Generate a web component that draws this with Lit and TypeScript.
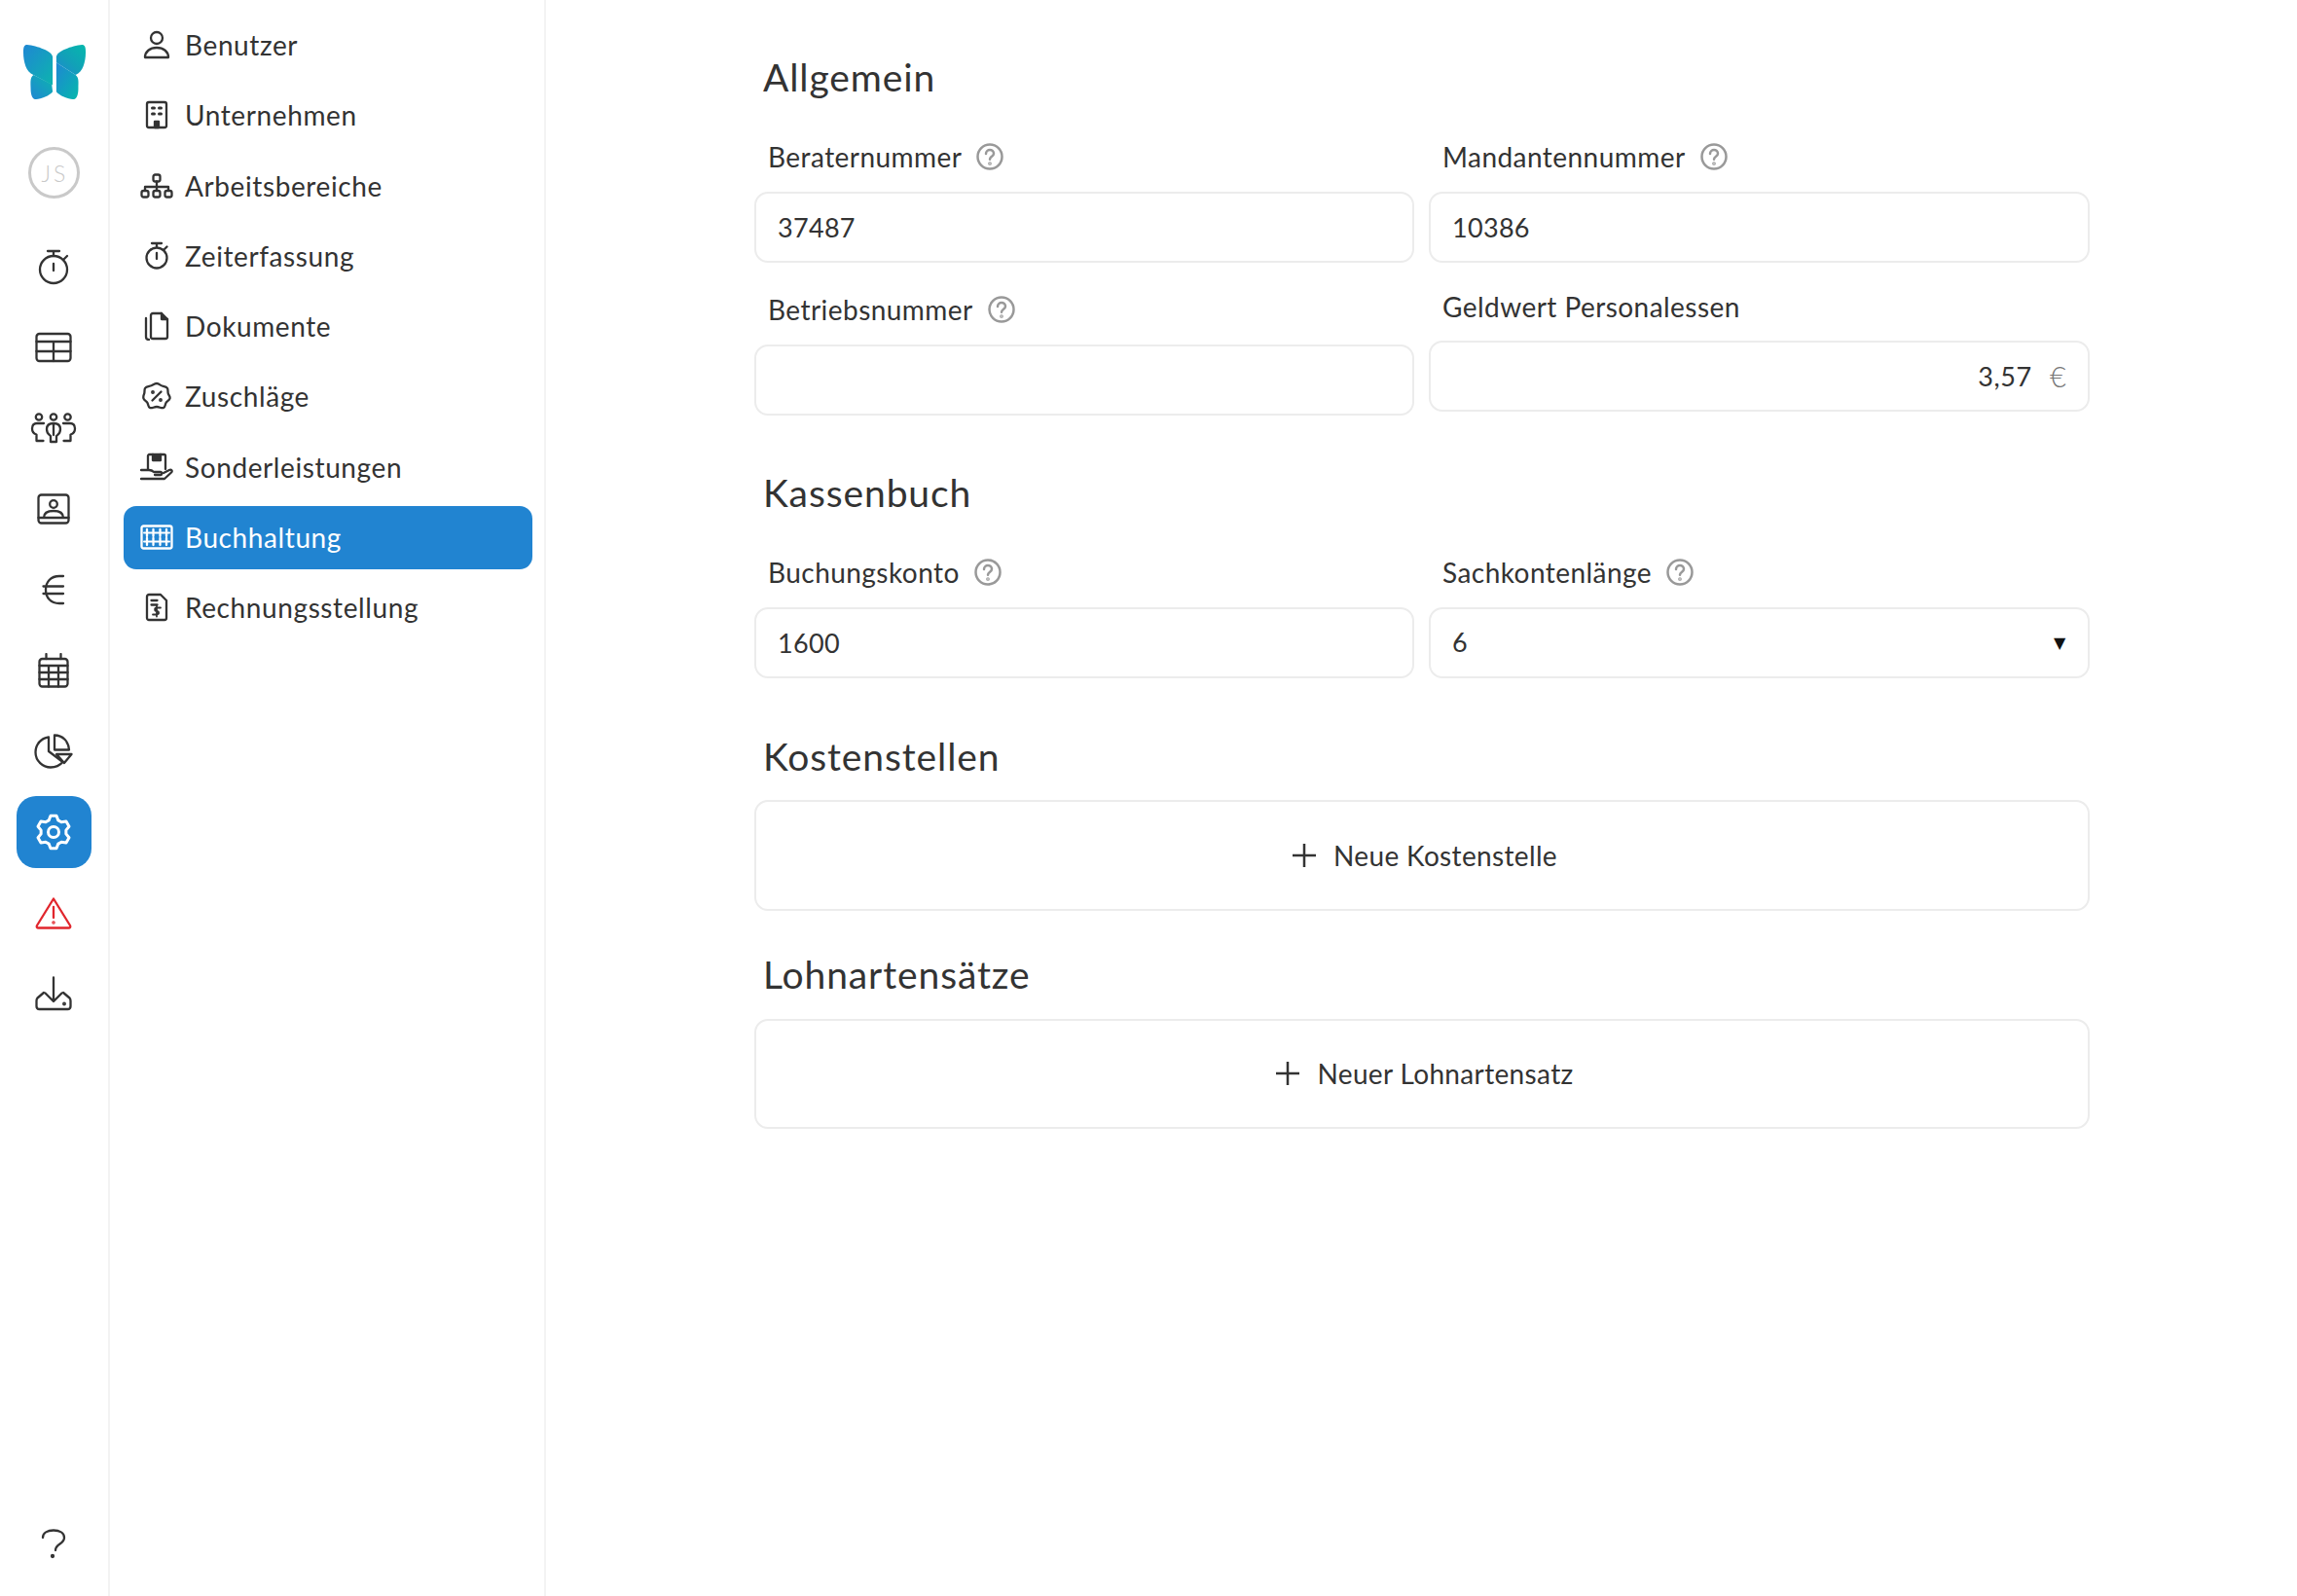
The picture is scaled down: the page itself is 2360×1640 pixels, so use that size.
import { LitElement, html, css, svg } from "lit";
import { customElement } from "lit/decorators.js";

const ic = (w: number, h: number, body: unknown, cls = "") => html`<svg class="ic ${cls}" width=${w} height=${h} viewBox="0 0 ${w} ${h}">${body}</svg>`;

function gearPath(cx: number, cy: number, ro: number, ri: number, n: number) {
  let d = "";
  const step = (Math.PI * 2) / n;
  for (let i = 0; i < n; i++) {
    const a = i * step - Math.PI / 2;
    const pts: [number, number][] = [
      [a - step * 0.36, ri], [a - step * 0.17, ro], [a + step * 0.17, ro], [a + step * 0.36, ri],
    ];
    pts.forEach(([t, r], j) => {
      const x = (cx + Math.cos(t) * r).toFixed(2);
      const y = (cy + Math.sin(t) * r).toFixed(2);
      d += i === 0 && j === 0 ? `M${x} ${y}` : `L${x} ${y}`;
    });
  }
  return d + "Z";
}

const rail = {
  timer: ic(38, 38, svg`<circle cx="19" cy="22" r="14"/><path d="M13 3h12M19 3v5M19 16v7M29 12l4-4"/>`),
  table: ic(38, 32, svg`<rect x="1.5" y="2" width="35" height="28" rx="3"/><path d="M1.5 10h35M1.5 20h35M19 10v20"/>`),
  people: ic(48, 32, svg`<circle cx="9" cy="4.5" r="3.2"/><circle cx="24" cy="4.5" r="3.2"/><circle cx="38.5" cy="4.5" r="3.2"/>
    <path d="M24 11c-5 0-7 2-7 6 0 5 3 6 4 7v6h6v-6c1-1 4-2 4-7 0-4-2-6-7-6zM24 11v12"/>
    <path d="M14 11H7c-3 0-5 2-5 5.500 0 3 1.500 5 4.500 6V29h7M34 11h7c3 0 5 2 5 5.500 0 3-1.500 5-4.500 6V29h-7"/>`),
  contact: ic(34, 32, svg`<rect x="1.500" y="1.500" width="31" height="29" rx="3"/><circle cx="17" cy="11" r="3.800"/><path d="M1.500 25h31M7 25c0-5 4-7 10-7s10 2 10 7"/>`),
  euro: ic(24, 32, svg`<path d="M22 2h-4C9 2 4 8 4 16s5 14 14 14h4M1.500 12.500H22M1.500 20H22"/>`),
  calendar: ic(32, 36, svg`<rect x="1.500" y="6" width="29" height="28.500" rx="3"/><path d="M8.500 1v5M23.500 1v5M1.500 13h29M1.500 20h29M1.500 27h29M11 13v21.500M21 13v21.500"/>`),
  pie: ic(40, 36, svg`<path d="M15 3.500C7 4.500 1.500 11 1.500 19c0 9 7.500 15.500 15.500 15.500 5 0 9.500-2 12.500-5.500L15 18z"/><path d="M21 1.500c8.500 0 14.500 6.500 15 15H21z"/><path d="M23 21h15.500L31 30z"/>`),
  gear: ic(38, 38, svg`<path d=${gearPath(19, 19, 17, 13, 6)}/><circle cx="19" cy="19" r="5.500"/>`, "white"),
  warn: ic(38, 34, svg`<path d="M19 2.500 36 30c.8 1.500 0 2.500-1.500 2.500h-31C2 32.500 1.200 31.500 2 30z"/><path d="M19 11v11"/><circle cx="19" cy="27" r=".6"/>`, "red"),
  down: ic(38, 36, svg`<path d="M19 1.500V26M10.500 17.500l8.500 8.500 8.500-8.500"/><path d="M9 17 2.500 22.500c-.8 1-1 1.500-1 3v5.500c0 2 1 3 3 3h29c2 0 3-1 3-3v-5.500c0-1.500-.2-2-1-3L29 17"/><circle cx="30" cy="28.500" r=".8"/>`),
  help: ic(26, 32, svg`<path d="M2 10C2 5 7 2.500 13 2.500s11 2.500 11 7.500c0 7-9 6-9 13"/><circle cx="12" cy="29" r="1"/>`),
};

const nav: [string, unknown][] = [
  ["Benutzer", ic(28, 30, svg`<circle cx="14" cy="8" r="6"/><path d="M2 28c0-6 5-10 12-10s12 4 12 10z"/>`)],
  ["Unternehmen", ic(24, 30, svg`<rect x="2" y="2" width="20" height="26" rx="2"/><path d="M7.500 8h2M14.500 8h2M7.500 14h2M14.500 14h2" stroke-width="3"/><path d="M10 28v-6h4v6z" class="f"/>`)],
  ["Arbeitsbereiche", ic(34, 26, svg`<rect x="13.500" y="1.500" width="7" height="7" rx="2"/><path d="M17 8.500v9M5 17.500v-3.500h24v3.500"/><rect x="1.500" y="18" width="7" height="6.500" rx="2"/><rect x="13.500" y="18" width="7" height="6.500" rx="2"/><rect x="25.500" y="18" width="7" height="6.500" rx="2"/>`)],
  ["Zeiterfassung", ic(26, 30, svg`<circle cx="13" cy="17" r="10.500"/><path d="M8 2h10M13 2v4M13 12v6M21 8l2.500-2.500"/>`)],
  ["Dokumente", ic(26, 30, svg`<path d="M9 2h9l6 6v18c0 1-1 2-2 2H9c-1 0-2-1-2-2V4c0-1 1-2 2-2zM2 7v19c0 2 1 3 3 3"/><path d="M18 2v6h6" class="f"/>`)],
  ["Zuschläge", ic(30, 30, svg`<path d="M15 2c2.500 0 3.500 2 5.500 2.500S25 5 26 7s0 4 1 6 2 2.500 1.500 4.500-3 2.500-4 4.500-.5 4-2.500 5-4-1-7-1-5 2-7 1-1.500-3-2.500-5-3.500-2.500-4-4.500S1 15 2 13s0-4 1-6 3.500-2 5.500-2.500S12.500 2 15 2z"/><path d="M10.500 19.500l9-9"/><circle cx="11" cy="11" r=".8"/><circle cx="19" cy="19" r=".8"/>`)],
  ["Sonderleistungen", ic(34, 30, svg`<path d="M8 17V3.500C8 2.700 8.700 2 9.500 2h15c.8 0 1.500.7 1.500 1.500V17"/><path d="M13 2v6h8V2" class="f"/><path d="M1 18h8c2 0 4 1 5 2h7c1.500 0 1.500 3 0 3h-6M24 21l6-3c2-1 3.500 1 2 2.500L25 27H1"/>`)],
  ["Buchhaltung", ic(34, 26, svg`<rect x="1.500" y="1.500" width="31" height="23" rx="2"/><path d="M7 5v7M13.500 5v7M20.500 5v7M27 5v7M7 14v7M13.500 14v7M20.500 14v7M27 14v7" stroke-dasharray="2.500 2"/><path d="M4 8.500h26M4 17.500h26" stroke-width="2"/>`)],
  ["Rechnungsstellung", ic(24, 30, svg`<path d="M4 2h12l6 6v18c0 1-1 2-2 2H4c-1 0-2-1-2-2V4c0-1 1-2 2-2z"/><path d="M6.500 8h6M6.500 12.500h6"/><path d="M16 15.500h-4c-2.500 0-2.500 3.500 0 3.500s3 3.500 0 3.500H8M12 13.500v11" stroke-width="1.800"/>`)],
];

const help = html`<svg class="help" width="28" height="28" viewBox="0 0 28 28"><circle cx="14" cy="14" r="12.500"/><path d="M10 11c0-2.500 2-4 4-4s4 1.500 4 3.800c0 3-4 3-4 6"/><circle cx="14" cy="21" r=".6"/></svg>`;
const plus = html`<svg class="plus" width="24" height="24" viewBox="0 0 24 24"><path d="M12 0v24M0 12h24"/></svg>`;

@customElement("app-root")
export class AppRoot extends LitElement {
  static styles = css`
    :host { display: flex; width: 2360px; height: 1640px; background: #fff; color: #333;
      font-family: "Lato", "Noto Sans", sans-serif; font-size: 28px; letter-spacing: .6px; overflow: hidden; }
    * { box-sizing: border-box; }
    svg.ic { fill: none; stroke: #333; stroke-width: 2.3; stroke-linecap: round; stroke-linejoin: round; flex: none; display: block; }
    svg.ic .f { fill: #333; }
    svg.ic.white { stroke: #fff; stroke-width: 3; }
    svg.ic.red { stroke: #e1262d; }
    .rail { width: 113px; flex: none; border-right: 2px solid #f3f3f3; display: flex; flex-direction: column; align-items: center; }
    .logo { margin-top: 45px; height: 58px; }
    .avatar { margin-top: 48px; width: 53px; height: 53px; border-radius: 50%; border: 3px solid #c9c9c9; color: #c9c9c9;
      display: flex; align-items: center; justify-content: center; font-size: 23px; font-weight: 300; letter-spacing: 3px; padding-left: 2px; }
    .slots { margin-top: 28px; display: flex; flex-direction: column; align-items: center; }
    .slot { height: 83px; width: 77px; display: flex; align-items: center; justify-content: center; }
    .slot svg { transform: translateX(-1px); }
    .slot.on { background: #2184d1; border-radius: 20px; height: 74px; margin: 4.500px 0; }
    .helpbtn { margin-top: auto; margin-bottom: 38px; transform: translateX(-1px); }
    .side { width: 448px; flex: none; border-right: 2px solid #f3f3f3; padding: 14px 12px 14px 14px; display: flex; flex-direction: column; gap: 7.250px; }
    .item { height: 65px; border-radius: 13px; display: flex; align-items: center; gap: 11px; padding-bottom: 1px; }
    .item .iw { width: 36px; margin-left: 16px; display: flex; justify-content: center; flex: none; }
    .item.on { background: #2184d1; color: #fff; }
    .item.on svg.ic { stroke: #fff; }
    .main { flex: 1; padding: 52px 0 0 214px; }
    .form { width: 1372px; }
    h2 { margin: 0; font-weight: 400; font-size: 39px; letter-spacing: .9px; line-height: 54px; padding-left: 9px; }
    .grid { display: grid; grid-template-columns: 678px 679px; column-gap: 15px; row-gap: 30px; align-items: start; margin-top: 37px; }
    .lab { height: 36px; display: flex; align-items: center; gap: 15px; padding: 0 0 1px 14px; margin-bottom: 18px; letter-spacing: .45px; }
    .lab.plain { height: 32px; padding-bottom: 2px; }
    svg.help { fill: none; stroke: #999; stroke-width: 2.500; stroke-linecap: round; display: block; }
    .inp { display: block; width: 100%; height: 73px; border: 2px solid #ececec; border-radius: 14px; background: #fff;
      padding: 0 22px; font: inherit; letter-spacing: .3px; font-size: 27px; color: #333; outline: none; }
    .money { display: flex; align-items: center; justify-content: flex-end; gap: 18px; height: 73px; border: 2px solid #ececec; border-radius: 14px; padding: 0 22px; font-size: 27px; letter-spacing: .3px; }
    .money input { border: 0; outline: 0; font: inherit; letter-spacing: .6px; color: #333; flex: 1; min-width: 0; text-align: right; padding: 0; background: none; }
    .money span { color: #777; font-weight: 300; font-size: 29px; }
    .sel { display: flex; align-items: center; justify-content: space-between; height: 73px; border: 2px solid #ececec; border-radius: 14px; padding: 0 22px; font-size: 27px; }
    .sel span:first-child { margin-top: -2px; }
    .tri { font-family: "DejaVu Sans", sans-serif; font-size: 16px; color: #111; }
    .h-kasse { margin-top: 52px; }
    .h-kost { margin-top: 53px; }
    .h-lohn { margin-top: 38px; }
    .add { display: flex; align-items: center; justify-content: center; gap: 18px; margin-top: 18px; height: 114px; border: 2px solid #ececec; border-radius: 14px; padding-left: 6px; letter-spacing: .35px; }
    .add.low { margin-top: 19px; height: 113px; padding-bottom: 2px; }
    svg.plus { stroke: #333; stroke-width: 2.500; fill: none; display: block; }
  `;

  field(label: string, value: string, hasHelp = true) {
    return html`<div>
      <div class="lab">${label}${hasHelp ? help : ""}</div>
      <input class="inp" .value=${value} />
    </div>`;
  }

  render() {
    return html`
      <div class="rail">
        <svg class="logo" width="64" height="58" viewBox="0 0 68 60" preserveAspectRatio="none">
          <defs>
            <linearGradient id="a" x1="0" y1="0" x2="1" y2="1"><stop offset="0" stop-color="#1f87d3"/><stop offset="1" stop-color="#0db4ae"/></linearGradient>
            <linearGradient id="b" x1="1" y1="0" x2="0" y2="1"><stop offset="0" stop-color="#05b8ac"/><stop offset=".55" stop-color="#12a0b8"/><stop offset="1" stop-color="#1f87d3"/></linearGradient>
            <linearGradient id="c" x1="1" y1="0" x2="0" y2="1"><stop offset="0" stop-color="#0db4ae"/><stop offset="1" stop-color="#1f87d3"/></linearGradient>
            <linearGradient id="d" x1="0" y1="0" x2="1" y2="1"><stop offset="0" stop-color="#1f87d3"/><stop offset="1" stop-color="#05b8ac"/></linearGradient>
          </defs>
          <path fill="url(#c)" d="M11 33c-4 3-3 8-3 14 0 8 2 12 6 12 5 0 15-4 18-8l-1-8z"/>
          <path fill="url(#a)" d="M4 1C1 1 0 3 0 9c0 10 3 21 11 24l21 11V14C32 8 15 2 4 1z"/>
          <path fill="url(#d)" d="M57 33c4 3 3 8 3 14 0 8-2 12-6 12-5 0-15-4-18-8V20z"/>
          <path fill="url(#b)" d="M64 1c3 0 4 2 4 8 0 10-3 21-11 24L36 20v-6C36 8 53 2 64 1z"/>
        </svg>
        <div class="avatar">JS</div>
        <div class="slots">
          <div class="slot">${rail.timer}</div>
          <div class="slot">${rail.table}</div>
          <div class="slot">${rail.people}</div>
          <div class="slot">${rail.contact}</div>
          <div class="slot">${rail.euro}</div>
          <div class="slot">${rail.calendar}</div>
          <div class="slot">${rail.pie}</div>
          <div class="slot on">${rail.gear}</div>
          <div class="slot">${rail.warn}</div>
          <div class="slot">${rail.down}</div>
        </div>
        <div class="helpbtn">${rail.help}</div>
      </div>
      <div class="side">
        ${nav.map(([t, i]) => html`<div class="item ${t === "Buchhaltung" ? "on" : ""}"><span class="iw">${i}</span>${t}</div>`)}
      </div>
      <div class="main">
        <div class="form">
          <h2>Allgemein</h2>
          <div class="grid">
            ${this.field("Beraternummer", "37487")}
            ${this.field("Mandantennummer", "10386")}
            ${this.field("Betriebsnummer", "")}
            <div>
              <div class="lab plain">Geldwert Personalessen</div>
              <div class="money"><input .value=${"3,57"} /><span>€</span></div>
            </div>
          </div>
          <h2 class="h-kasse">Kassenbuch</h2>
          <div class="grid">
            ${this.field("Buchungskonto", "1600")}
            <div>
              <div class="lab">Sachkontenlänge${help}</div>
              <div class="sel"><span>6</span><span class="tri">▼</span></div>
            </div>
          </div>
          <h2 class="h-kost">Kostenstellen</h2>
          <div class="add">${plus}<span>Neue Kostenstelle</span></div>
          <h2 class="h-lohn">Lohnartensätze</h2>
          <div class="add low">${plus}<span>Neuer Lohnartensatz</span></div>
        </div>
      </div>
    `;
  }
}
